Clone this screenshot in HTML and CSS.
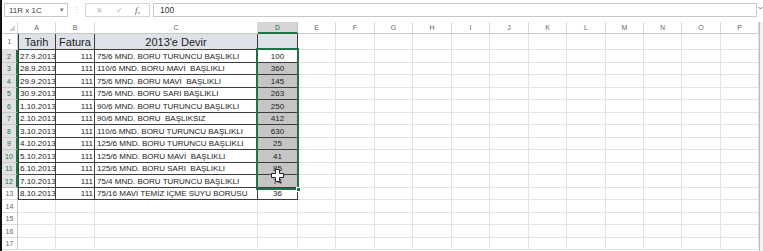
FILE: index.html
```html
<!DOCTYPE html>
<html lang="tr">
<head>
<meta charset="utf-8">
<link rel="stylesheet" href="styles.css">
</head>
<body>
<div class="app">
  <div class="fbar">
    <div class="namebox"><span>11R x 1C</span><span class="dd">▾</span></div>
    <div class="sep">⋮</div>
    <div class="fxbox">
      <span class="ic">✕</span><span class="ic">✓</span><span class="fx"><i>f</i><sub>x</sub></span>
    </div>
    <div class="finput">100</div>
    <div class="caret"><svg width="5" height="4" viewBox="0 0 5 4"><path d="M0.5 1 L2.5 3 L4.5 1" fill="none" stroke="#777" stroke-width="1"/></svg></div>
  </div>
  <div class="wrap">
    <div class="sheet">
      <div class="h corner"></div><div class="h">A</div><div class="h">B</div><div class="h">C</div><div class="h hs">D</div><div class="h">E</div><div class="h">F</div><div class="h">G</div><div class="h">H</div><div class="h">I</div><div class="h">J</div><div class="h">K</div><div class="h">L</div><div class="h">M</div><div class="h">N</div><div class="h">O</div><div class="h">P</div>

      <div class="r">1</div><div class="t a hd">Tarih</div><div class="t hd">Fatura</div><div class="t hd">2013'e Devir</div><div class="t hd"></div><div></div><div></div><div></div><div></div><div></div><div></div><div></div><div></div><div></div><div></div><div></div><div></div>

      <div class="r sr">2</div><div class="t a">27.9.2013</div><div class="t n">111</div><div class="t">75/6 MND. BORU TURUNCU BAŞLIKLI</div><div class="t m">100</div><div></div><div></div><div></div><div></div><div></div><div></div><div></div><div></div><div></div><div></div><div></div><div></div>

      <div class="r sr">3</div><div class="t a">28.9.2013</div><div class="t n">111</div><div class="t">110/6 MND. BORU MAVİ  BAŞLIKLI</div><div class="t m s">360</div><div></div><div></div><div></div><div></div><div></div><div></div><div></div><div></div><div></div><div></div><div></div><div></div>

      <div class="r sr">4</div><div class="t a">29.9.2013</div><div class="t n">111</div><div class="t">75/6 MND. BORU MAVİ  BAŞLIKLI</div><div class="t m s">145</div><div></div><div></div><div></div><div></div><div></div><div></div><div></div><div></div><div></div><div></div><div></div><div></div>

      <div class="r sr">5</div><div class="t a">30.9.2013</div><div class="t n">111</div><div class="t">75/6 MND. BORU SARI BAŞLIKLI</div><div class="t m s">263</div><div></div><div></div><div></div><div></div><div></div><div></div><div></div><div></div><div></div><div></div><div></div><div></div>

      <div class="r sr">6</div><div class="t a">1.10.2013</div><div class="t n">111</div><div class="t">90/6 MND. BORU TURUNCU BAŞLIKLI</div><div class="t m s">250</div><div></div><div></div><div></div><div></div><div></div><div></div><div></div><div></div><div></div><div></div><div></div><div></div>

      <div class="r sr">7</div><div class="t a">2.10.2013</div><div class="t n">111</div><div class="t">90/6 MND. BORU  BAŞLIKSIZ</div><div class="t m s">412</div><div></div><div></div><div></div><div></div><div></div><div></div><div></div><div></div><div></div><div></div><div></div><div></div>

      <div class="r sr">8</div><div class="t a">3.10.2013</div><div class="t n">111</div><div class="t">110/6 MND. BORU TURUNCU BAŞLIKLI</div><div class="t m s">630</div><div></div><div></div><div></div><div></div><div></div><div></div><div></div><div></div><div></div><div></div><div></div><div></div>

      <div class="r sr">9</div><div class="t a">4.10.2013</div><div class="t n">111</div><div class="t">125/6 MND. BORU TURUNCU BAŞLIKLI</div><div class="t m s">25</div><div></div><div></div><div></div><div></div><div></div><div></div><div></div><div></div><div></div><div></div><div></div><div></div>

      <div class="r sr">10</div><div class="t a">5.10.2013</div><div class="t n">111</div><div class="t">125/6 MND. BORU MAVİ  BAŞLIKLI</div><div class="t m s">41</div><div></div><div></div><div></div><div></div><div></div><div></div><div></div><div></div><div></div><div></div><div></div><div></div>

      <div class="r sr">11</div><div class="t a">6.10.2013</div><div class="t n">111</div><div class="t">125/6 MND. BORU SARI  BAŞLIKLI</div><div class="t m s">85</div><div></div><div></div><div></div><div></div><div></div><div></div><div></div><div></div><div></div><div></div><div></div><div></div>

      <div class="r sr">12</div><div class="t a">7.10.2013</div><div class="t n">111</div><div class="t">75/4 MND. BORU TURUNCU BAŞLIKLI</div><div class="t m s">74</div><div></div><div></div><div></div><div></div><div></div><div></div><div></div><div></div><div></div><div></div><div></div><div></div>

      <div class="r">13</div><div class="t a">8.10.2013</div><div class="t n">111</div><div class="t">75/16 MAVİ TEMİZ İÇME SUYU BORUSU</div><div class="t m">36</div><div></div><div></div><div></div><div></div><div></div><div></div><div></div><div></div><div></div><div></div><div></div><div></div>

      <div class="r">14</div><div></div><div></div><div></div><div></div><div></div><div></div><div></div><div></div><div></div><div></div><div></div><div></div><div></div><div></div><div></div><div></div>

      <div class="r">15</div><div></div><div></div><div></div><div></div><div></div><div></div><div></div><div></div><div></div><div></div><div></div><div></div><div></div><div></div><div></div><div></div>

      <div class="r">16</div><div></div><div></div><div></div><div></div><div></div><div></div><div></div><div></div><div></div><div></div><div></div><div></div><div></div><div></div><div></div><div></div>

      <div class="r">17</div><div></div><div></div><div></div><div></div><div></div><div></div><div></div><div></div><div></div><div></div><div></div><div></div><div></div><div></div><div></div><div></div>

      <span class="sel">
        <span class="handle"></span>
        <svg class="cursor" width="13" height="13" viewBox="0 0 13 13"><path d="M4.5 0.5 H8.5 V4.5 H12.5 V8.5 H8.5 V12.5 H4.5 V8.5 H0.5 V4.5 H4.5 Z" fill="#fff" stroke="#222" stroke-width="1"/></svg>
      </span>
    </div>
    <div class="vscroll"></div>
  </div>
</div>
</body>
</html>
```

FILE: styles.css
```css
* { box-sizing: border-box; }

body {
  margin: 0;
  background: #fff;
  font-family: "Liberation Sans", Arial, sans-serif;
}

.app {
  width: 763px;
  height: 251px;
  overflow: hidden;
  border-left: 2px solid #111;
  display: flex;
  flex-direction: column;
  background: #fff;
}

/* formula bar */
.fbar {
  height: 22px;
  flex: none;
  display: flex;
  align-items: flex-start;
  padding: 3px 0 0 2px;
}

.namebox {
  width: 64px;
  height: 14px;
  border: 1px solid #c8c8c8;
  display: flex;
  align-items: center;
  justify-content: space-between;
  padding: 0 3px 0 4px;
  font-size: 8px;
  color: #444;
}

.dd { font-size: 7px; color: #777; }

.sep {
  width: 17px;
  height: 14px;
  text-align: center;
  font-size: 8px;
  line-height: 14px;
  color: #c4c4c4;
}

.fxbox {
  width: 65px;
  height: 14px;
  border: 1px solid #d6d6d6;
  margin-right: 3px;
  display: flex;
  align-items: center;
  padding-left: 9px;
  gap: 12px;
}

.ic { font-size: 8px; color: #b4b4b4; width: 8px; text-align: center; }

.fx {
  font-family: "Liberation Serif", serif;
  font-size: 9px;
  color: #555;
}
.fx sub { font-size: 5px; vertical-align: -1px; }

.finput {
  width: 604px;
  height: 14px;
  border: 1px solid #c8c8c8;
  padding-left: 6px;
  font-size: 8.5px;
  line-height: 12px;
  color: #333;
}

.caret {
  width: 6px;
  height: 14px;
  display: flex;
  align-items: flex-start;
  padding-top: 3px;
  justify-content: center;
}

/* sheet */
.wrap {
  flex: 1;
  display: flex;
  overflow: hidden;
}

.sheet {
  position: relative;
  display: grid;
  grid-template-columns: 16px 38px 39px 163px 40px 38px 39px 38px 39px 38px 39px 38px 39px 38px 38px 39px 38px;
  grid-template-rows: 12px 16px 13px 12px 13px 12px 13px 12px 13px 12px 13px 12px 13px 12px 13px 12px 13px 12px;
  align-self: flex-start;
}

.sheet > div {
  border-right: 1px solid #e2e2e2;
  border-bottom: 1px solid #e2e2e2;
  font-size: 8px;
  color: #1c1c1c;
  white-space: pre;
  overflow: hidden;
  display: flex;
  align-items: center;
  padding: 0 2px;
}

.sheet > .h {
  background: #fff;
  border-right-color: #dadada;
  border-bottom-color: #c8c8c8;
  color: #666;
  font-size: 7px;
  justify-content: center;
}

.sheet > .hs {
  background: #d6d6d6;
  color: #217346;
  border-bottom: 2px solid #217346;
  border-right-color: #bdbdbd;
}

.sheet > .corner { position: relative; }
.corner::after {
  content: "";
  position: absolute;
  right: 2px;
  bottom: 2px;
  border-left: 6px solid transparent;
  border-bottom: 6px solid #d0d0d0;
}

.sheet > .r {
  background: #fff;
  border-right-color: #c8c8c8;
  border-bottom-color: #dadada;
  color: #666;
  font-size: 7px;
  justify-content: center;
  padding: 0;
}

.sheet > .sr {
  background: #e2e2e2;
  color: #217346;
  border-right: 2px solid #217346;
  border-bottom-color: #c9c9c9;
}

.sheet > .t {
  border-right-color: #3c3c3c;
  border-bottom-color: #3c3c3c;
}

.sheet > .a { box-shadow: inset 1px 0 0 #3c3c3c; }

.sheet > .hd {
  background: #dde1e8;
  font-size: 11px;
  justify-content: center;
  color: #222;
}

.sheet > .n { justify-content: flex-end; padding-right: 1px; }
.sheet > .m { justify-content: center; }
.sheet > .s { background: #c5c5c5; }

/* selection overlay D2:D12 */
.sel {
  position: absolute;
  grid-column: 5 / 6;
  grid-row: 3 / 14;
  top: -2px;
  left: -2px;
  right: -1px;
  bottom: -2px;
  border: 2px solid #217346;
  pointer-events: none;
}

.handle {
  position: absolute;
  right: -4px;
  bottom: -4px;
  width: 5px;
  height: 5px;
  background: #217346;
  border: 1px solid #fff;
}

.cursor {
  position: absolute;
  left: 13px;
  top: 119px;
}

.vscroll {
  flex: 1;
  border-left: 1px solid #bdbdbd;
  background: #f3f3f3;
}
```
